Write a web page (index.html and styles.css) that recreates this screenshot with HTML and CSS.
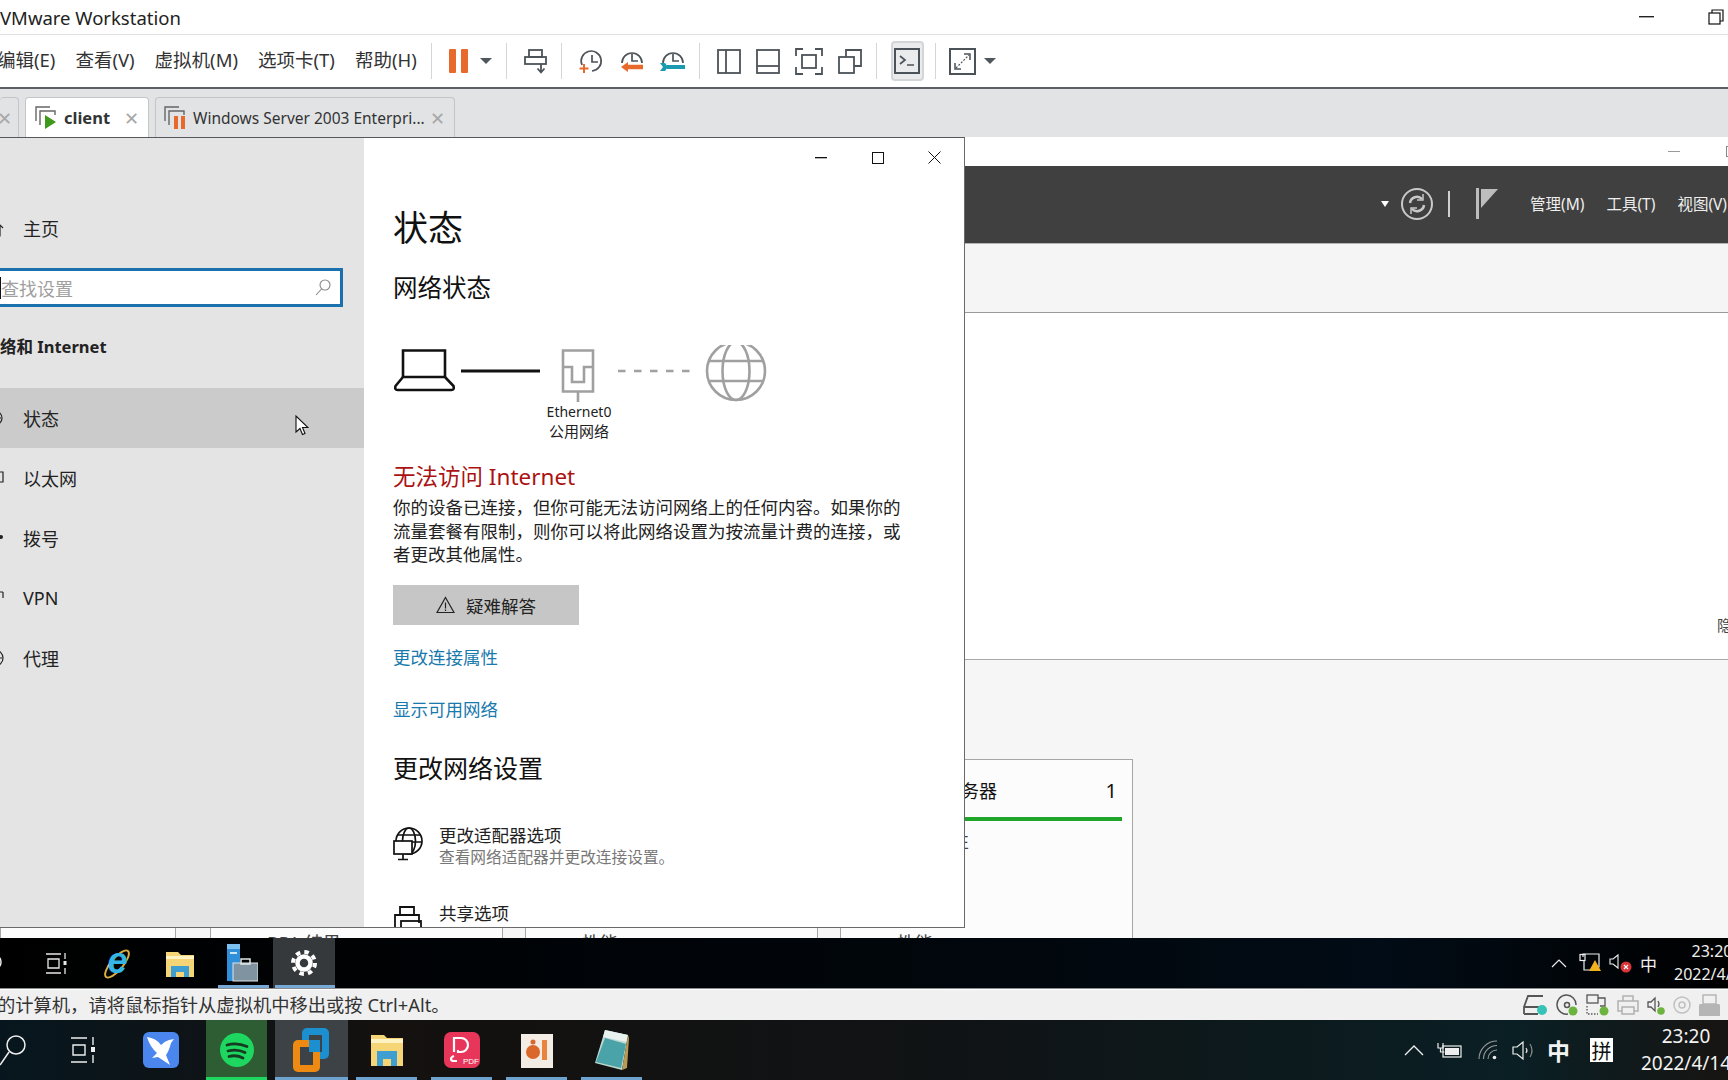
FILE: index.html
```html
<!DOCTYPE html>
<html lang="zh-CN">
<head>
    <meta charset="UTF-8">
    <title>VMware Workstation</title>
    <link rel="stylesheet" href="styles.css">
</head>
<body>
    <!-- host window title -->
    <div class="titlebar">
        <span class="app-title">VMware Workstation</span>
        <div class="app-controls">
            <svg width="15" height="2" viewBox="0 0 15 2"><rect width="15" height="1.400" fill="#222"/></svg>
            <svg width="16" height="16" viewBox="0 0 16 16" fill="none" stroke="#111" stroke-width="1.200"><rect x="1" y="4" width="11" height="11"/><path d="M4 4V1h11v11h-3"/></svg>
        </div>
    </div>

    <!-- menu and toolbar -->
    <div class="menubar">
        <span class="menu-item first">编辑(E)</span>
        <span class="menu-item">查看(V)</span>
        <span class="menu-item">虚拟机(M)</span>
        <span class="menu-item">选项卡(T)</span>
        <span class="menu-item">帮助(H)</span>
        <i class="sep"></i>
        <div class="tool-group wide">
            <svg width="19" height="24" viewBox="0 0 19 24"><rect width="7" height="24" rx="1" fill="#e8692c"/><rect x="12" width="7" height="24" rx="1" fill="#e8692c"/></svg>
            <i class="caret"></i>
        </div>
        <i class="sep"></i>
        <svg width="23" height="25" viewBox="0 0 23 25" fill="none" stroke="#4c5358" stroke-width="1.800"><rect x="5" y="1" width="13" height="7"/><rect x="1" y="8" width="21" height="7"/><path d="M17 15v8M13.500 19.500l3.500 4 3.500-4"/></svg>
        <i class="sep"></i>
        <div class="tool-group clocks">
            <svg width="24" height="26" viewBox="0 0 24 26" fill="none"><path d="M3 17a10 10 0 1 1 10 6" stroke="#4c5358" stroke-width="1.700"/><path d="M13 7v7h6" stroke="#4c5358" stroke-width="1.700"/><path d="M5 16v9M0.500 20.500h9" stroke="#e8692c" stroke-width="2"/></svg>
            <svg width="25" height="26" viewBox="0 0 25 26" fill="none"><path d="M3 15a10 10 0 0 1 20 0" stroke="#4c5358" stroke-width="1.700"/><path d="M13 6v7h6" stroke="#4c5358" stroke-width="1.700"/><path d="M24 19H8" stroke="#e8692c" stroke-width="4.500"/><path d="M9 14l-7 5 7 5z" fill="#e8692c"/></svg>
            <svg width="25" height="26" viewBox="0 0 25 26" fill="none"><path d="M3 15a10 10 0 0 1 20 0" stroke="#4c5358" stroke-width="1.700"/><path d="M13 6v7h6" stroke="#4c5358" stroke-width="1.700"/><path d="M7 19h18" stroke="#1b9bb0" stroke-width="4"/><path d="M0 15h5l3 4-3 4H0l3-4z" fill="#1b9bb0"/></svg>
        </div>
        <i class="sep"></i>
        <div class="tool-group panels">
            <svg width="24" height="25" viewBox="0 0 24 25" fill="none" stroke="#4c5358" stroke-width="1.800"><rect x="1" y="1" width="22" height="23"/><path d="M9 1v23"/></svg>
            <svg width="24" height="25" viewBox="0 0 24 25" fill="none" stroke="#4c5358" stroke-width="1.800"><rect x="1" y="1" width="22" height="23"/><path d="M1 17h22"/></svg>
            <svg width="28" height="27" viewBox="0 0 28 27" fill="none" stroke="#4c5358" stroke-width="1.800"><path d="M1 8V1h7M20 1h7v7M27 19v7h-7M8 26H1v-7"/><rect x="7" y="7" width="14" height="13"/></svg>
            <svg width="24" height="25" viewBox="0 0 24 25" fill="none" stroke="#4c5358" stroke-width="1.800"><rect x="1" y="8" width="15" height="16"/><path d="M8 8V1h15v16h-7"/></svg>
        </div>
        <i class="sep"></i>
        <div class="tool-active">
            <svg width="26" height="26" viewBox="0 0 26 26" fill="none" stroke="#4c5358"><rect x="1" y="1" width="24" height="24" stroke-width="2"/><path d="M6 8l5 4-5 4M13 17h7" stroke-width="1.700"/></svg>
        </div>
        <i class="sep"></i>
        <div class="tool-group fit">
            <svg width="27" height="27" viewBox="0 0 27 27" fill="none" stroke="#4c5358"><rect x="1" y="1" width="25" height="25" stroke-width="2"/><path d="M7 20l13-13" stroke-width="1.200" stroke-dasharray="2 1.500"/><path d="M15 6h6v6M6 15v6h6" stroke-width="1.500"/></svg>
            <i class="caret"></i>
        </div>
    </div>

    <!-- vm tabs -->
    <div class="tabbar">
        <div class="tab stub"><span class="tab-x">✕</span></div>
        <div class="tab current">
            <svg width="22" height="24" viewBox="0 0 22 24" fill="none"><path d="M1 15V1h14" stroke="#666" stroke-width="1.400"/><path d="M5 19V5h15v4" stroke="#666" stroke-width="1.400"/><path d="M10 9l11 7-11 7z" fill="#3f9a1c"/></svg>
            <span class="tab-name">client</span>
            <span class="tab-x">✕</span>
        </div>
        <div class="tab">
            <svg width="22" height="24" viewBox="0 0 22 24" fill="none"><path d="M1 15V1h14" stroke="#666" stroke-width="1.400"/><path d="M5 19V5h15v4" stroke="#666" stroke-width="1.400"/><rect x="10" y="10" width="4" height="13" fill="#e8692c"/><rect x="17" y="10" width="4" height="13" fill="#e8692c"/></svg>
            <span class="tab-label">Windows Server 2003 Enterpri...</span>
            <span class="tab-x">✕</span>
        </div>
    </div>

    <!-- guest screen -->
    <div class="guest">
        <div class="desktop">
            <!-- server manager behind the settings window -->
            <div class="sm-strip">
                <i class="sm-min"></i>
                <i class="sm-max"></i>
            </div>
            <div class="sm-bar">
                <i class="sm-caret"></i>
                <svg class="sm-refresh" width="34" height="34" viewBox="0 0 34 34" fill="none" stroke="#c9c9c9"><circle cx="17" cy="17" r="15" stroke-width="2"/><path d="M10 16a7 7 0 0 1 12-4M24 18a7 7 0 0 1-12 4" stroke-width="2.500"/><path d="M23 7v6h-6M11 27v-6h6" stroke-width="1.500"/></svg>
                <i class="sm-sep"></i>
                <svg class="sm-flag" width="22" height="31" viewBox="0 0 22 31"><rect x="0" y="0" width="3" height="31" fill="#bdbdbd"/><path d="M5 1h17L5 20z" fill="#bdbdbd"/></svg>
                <span class="sm-menu first">管理(M)</span>
                <span class="sm-menu">工具(T)</span>
                <span class="sm-menu">视图(V)</span>
            </div>
            <div class="sm-band"></div>
            <div class="sm-panel"><span class="sm-hide">隐藏</span></div>
            <div class="sm-tiles">
                <div class="tile tile-a"></div>
                <div class="tile tile-b"><p class="tile-low">BPA 结果</p></div>
                <div class="tile tile-c"><p class="tile-low">性能</p></div>
                <div class="tile tile-d">
                    <div class="tile-head"><span>所有服务器</span><b>1</b></div>
                    <i class="tile-ok"></i>
                    <p class="tile-first">可管理性</p>
                    <p class="tile-last">性能</p>
                </div>
            </div>

            <!-- settings window -->
            <div class="settings">
                <div class="side">
                    <div class="side-row home">
                        <svg class="side-icon" width="18" height="18" viewBox="0 0 18 18" fill="none" stroke="#222" stroke-width="1.200"><path d="M1 9l8-8 8 8M14 7v10h-3v-5H7v5H4V7"/></svg>
                        <span>主页</span>
                    </div>
                    <div class="search">
                        <i class="search-caret"></i>
                        <span class="search-hint">查找设置</span>
                        <svg width="16" height="17" viewBox="0 0 16 17" fill="none" stroke="#888" stroke-width="1.100"><circle cx="10" cy="6" r="5"/><path d="M6.500 10L1 16"/></svg>
                    </div>
                    <div class="side-title">络和 Internet</div>
                    <div class="side-nav">
                        <div class="side-row active">
                            <svg class="side-icon" width="18" height="18" viewBox="0 0 18 18" fill="none" stroke="#222" stroke-width="1.200"><circle cx="9" cy="9" r="7"/><path d="M3 9h12"/></svg>
                            <span>状态</span>
                        </div>
                        <div class="side-row">
                            <svg class="side-icon" width="18" height="18" viewBox="0 0 18 18" fill="none" stroke="#222" stroke-width="1.200"><path d="M4 3h13v10H4zM10 13v3"/></svg>
                            <span>以太网</span>
                        </div>
                        <div class="side-row">
                            <svg class="side-icon" width="18" height="18" viewBox="0 0 18 18" fill="#222"><circle cx="15" cy="8" r="2"/></svg>
                            <span>拨号</span>
                        </div>
                        <div class="side-row">
                            <svg class="side-icon" width="18" height="18" viewBox="0 0 18 18" fill="none" stroke="#222" stroke-width="1.200"><path d="M10 3h7M17 3v6"/></svg>
                            <span>VPN</span>
                        </div>
                        <div class="side-row">
                            <svg class="side-icon" width="18" height="18" viewBox="0 0 18 18" fill="none" stroke="#222" stroke-width="1.200"><circle cx="9" cy="9" r="8"/><path d="M9 1v16M2 9h14"/></svg>
                            <span>代理</span>
                        </div>
                    </div>
                </div>

                <div class="main">
                    <div class="win-controls">
                        <span class="win-btn"><svg width="12" height="2" viewBox="0 0 12 2"><rect width="12" height="1.300" fill="#111"/></svg></span>
                        <span class="win-btn"><svg width="12" height="12" viewBox="0 0 12 12" fill="none" stroke="#111"><rect x=".5" y=".5" width="11" height="11"/></svg></span>
                        <span class="win-btn"><svg width="13" height="13" viewBox="0 0 13 13" stroke="#111"><path d="M.5.5l12 12M12.500.5l-12 12"/></svg></span>
                    </div>
                    <h1>状态</h1>
                    <h2 class="net-head">网络状态</h2>
                    <svg class="diagram" width="380" height="100" viewBox="0 0 380 100" fill="none">
                        <!-- laptop -->
                        <path d="M9 32V5.500h42V32" stroke="#111" stroke-width="2.600"/>
                        <path d="M9 32L1.500 41q-1 4 2 4h54q3 0 2-4L51 32z" stroke="#111" stroke-width="2.600"/>
                        <path d="M67 26h79" stroke="#111" stroke-width="3"/>
                        <!-- adapter -->
                        <path d="M169 5.500h30v41h-30zM169 22h9v15h12V22h9M184 46.500V57" stroke="#a0a0a0" stroke-width="2.600"/>
                        <path d="M224 26h79" stroke="#a0a0a0" stroke-width="2.600" stroke-dasharray="7.500 8.500"/>
                        <!-- globe -->
                        <g stroke="#a0a0a0" stroke-width="2.600">
                            <circle cx="342" cy="26" r="29"/>
                            <ellipse cx="342" cy="26" rx="13.500" ry="29"/>
                            <path d="M316 16h52M316 36h52"/>
                        </g>
                        <text class="diagram-latin" x="185" y="72" text-anchor="middle">Ethernet0</text>
                        <text class="diagram-text" x="185" y="92" text-anchor="middle">公用网络</text>
                    </svg>
                    <div class="net-error">无法访问 Internet</div>
                    <p class="net-desc">你的设备已连接，但你可能无法访问网络上的任何内容。如果你的<br>流量套餐有限制，则你可以将此网络设置为按流量计费的连接，或<br>者更改其他属性。</p>
                    <div class="btn-trouble">
                        <svg width="19" height="18" viewBox="0 0 19 18" fill="none" stroke="#222" stroke-width="1.200"><path d="M9.500 1.500L18 16.500H1z"/><path d="M9.500 6.500v6M9.500 13.500v1.500"/></svg>
                        <span>疑难解答</span>
                    </div>
                    <a class="link first-link">更改连接属性</a>
                    <a class="link second-link">显示可用网络</a>
                    <h2 class="change-head">更改网络设置</h2>
                    <div class="option adapter">
                        <svg width="30" height="34" viewBox="0 0 30 34" fill="none" stroke="#111" stroke-width="1.700"><circle cx="16" cy="14" r="13"/><ellipse cx="16" cy="14" rx="6.500" ry="13"/><path d="M4 8h24M3 15h26"/><rect x="1" y="14" width="18" height="13" fill="#fff"/><path d="M10 27v5M5 32.500h10"/></svg>
                        <div class="option-text">
                            <div class="option-name">更改适配器选项</div>
                            <div class="option-sub">查看网络适配器并更改连接设置。</div>
                        </div>
                    </div>
                    <div class="option share">
                        <svg width="30" height="34" viewBox="0 0 30 34" fill="none" stroke="#111" stroke-width="1.800"><path d="M7 10V2h14v8M2 22V10h24v8"/><rect x="8" y="16" width="20" height="12"/></svg>
                        <div class="option-text">
                            <div class="option-name">共享选项</div>
                        </div>
                    </div>
                </div>
            </div>

            <svg class="pointer" width="14" height="21" viewBox="0 0 14 21"><path d="M1 1v16l4-3.500 2.500 6 2.500-1-2.500-6H13z" fill="#fff" stroke="#111" stroke-width="1.100"/></svg>
        </div>

        <!-- guest taskbar -->
        <div class="guest-taskbar">
            <span class="gt-btn gt-search"><svg width="20" height="20" viewBox="0 0 20 20" fill="none" stroke="#eee" stroke-width="1.500"><circle cx="8" cy="9" r="7"/></svg></span>
            <span class="gt-btn"><svg width="21" height="21" viewBox="0 0 21 21" fill="none" stroke="#e8e8e8" stroke-width="1.300"><path d="M0 1h15M0 20h15M2 6h11v9H2zM19 0v6M19 15v6"/><rect x="17.500" y="8" width="3" height="4" fill="#e8e8e8" stroke="none"/></svg></span>
            <span class="gt-btn">
                <svg width="30" height="32" viewBox="0 0 30 32" fill="none">
                    <ellipse cx="14" cy="17" rx="17" ry="6" transform="rotate(-50 14 17)" stroke="#d9b041" stroke-width="2"/>
                    <text class="ie-glyph" x="14.500" y="26" text-anchor="middle">e</text>
                </svg>
            </span>
            <span class="gt-btn">
                <svg width="28" height="29" viewBox="0 0 28 29"><path d="M0 3h12l3 3h13v22H0z" fill="#f5d576"/><rect y="7" width="28" height="3" fill="#fff3c4"/><path d="M5 17h18v11h-5v-5h-8v5H5z" fill="#3f9fd0"/></svg>
            </span>
            <span class="gt-btn running">
                <svg width="31" height="38" viewBox="0 0 31 38"><rect x="0" y="0" width="13" height="37" fill="#2f8fd8"/><rect x="0" y="0" width="13" height="5" fill="#7cc0f0"/><rect x="3" y="8" width="7" height="2" fill="#cde6f8"/><rect x="6" y="19" width="25" height="18" fill="#7f93a0" stroke="#dfe6ea"/><rect x="14" y="15" width="9" height="5" fill="none" stroke="#dfe6ea" stroke-width="1.500"/></svg>
            </span>
            <span class="gt-btn running current">
                <svg width="26" height="26" viewBox="0 0 26 26" fill="none"><circle cx="13" cy="13" r="6.500" stroke="#fff" stroke-width="4.500"/><circle cx="13" cy="13" r="11" stroke="#fff" stroke-width="4" stroke-dasharray="4.500 4.140"/></svg>
            </span>
            <div class="gt-tray">
                <svg class="tray-up" width="16" height="9" viewBox="0 0 16 9" fill="none" stroke="#eee" stroke-width="1.200"><path d="M1 8l7-7 7 7"/></svg>
                <svg class="tray-net" width="22" height="20" viewBox="0 0 22 20" fill="none" stroke="#eee" stroke-width="1.200"><path d="M4 4V1h16v13h-6M5 8v9h7"/><rect x="1" y="1.500" width="5" height="6"/><path d="M16 7l6 11H10z" fill="#f1b21d" stroke="none"/></svg>
                <svg class="tray-vol" width="24" height="20" viewBox="0 0 24 20" fill="none" stroke="#eee" stroke-width="1.100"><path d="M1 6h3l5-4v13l-5-4H1z"/><circle cx="17" cy="14" r="5.500" fill="#d9343a" stroke="none"/><path d="M15 12l4 4M19 12l-4 4" stroke="#fff"/></svg>
                <span class="tray-ime">中</span>
                <div class="tray-clock"><span>23:20</span><span>2022/4/14</span></div>
            </div>
        </div>
    </div>

    <!-- host status line -->
    <div class="statusbar">
        <span class="status-text">的计算机，请将鼠标指针从虚拟机中移出或按 Ctrl+Alt。</span>
        <div class="status-icons">
            <svg width="25" height="22" viewBox="0 0 25 22" fill="none" stroke="#555" stroke-width="1.800"><path d="M1 20V13L5 2h15"/><path d="M1 13h15M1 20h14"/><circle cx="19" cy="16" r="5" fill="#35c3b8" stroke="none"/></svg>
            <svg width="22" height="22" viewBox="0 0 22 22" fill="none" stroke="#555" stroke-width="1.500"><path d="M12 20A9.500 9.500 0 1 1 20 11"/><circle cx="11" cy="11" r="2.500"/><circle cx="17" cy="17" r="4.500" fill="#6cb33f" stroke="none"/></svg>
            <svg width="23" height="22" viewBox="0 0 23 22" fill="none" stroke="#555" stroke-width="1.300"><rect x="1" y="1" width="11" height="8"/><path d="M12 4h7v8h-5"/><path d="M1 12v8h11" stroke-dasharray="1.500 1.500"/><circle cx="18" cy="17" r="4.500" fill="#6cb33f" stroke="none"/></svg>
            <svg width="22" height="20" viewBox="0 0 22 20" fill="none" stroke="#b0b0b0" stroke-width="1.500"><path d="M6 6V1h10v5M5 16H1V6h20v10h-4M5 12h12v7H5z"/></svg>
            <svg width="18" height="21" viewBox="0 0 18 21" fill="none" stroke="#555" stroke-width="1.300"><path d="M1 7h3l4-4v13l-4-4H1zM11 6q2 3 0 6"/><circle cx="14" cy="16" r="3.800" fill="#6cb33f" stroke="none"/></svg>
            <svg width="18" height="18" viewBox="0 0 18 18" fill="none" stroke="#c0c0c0" stroke-width="1.500"><circle cx="9" cy="9" r="8"/><circle cx="9" cy="9" r="3"/></svg>
            <svg width="21" height="22" viewBox="0 0 21 22"><path d="M4 1h13v9H4z" fill="none" stroke="#b5b5b5" stroke-width="1.500"/><path d="M1 10h19q1 0 1 2v10H0V12q0-2 1-2z" fill="#b5b5b5"/></svg>
        </div>
    </div>

    <!-- host taskbar -->
    <div class="host-taskbar">
        <span class="ht-btn ht-search"><svg width="26" height="34" viewBox="0 0 26 34" fill="none" stroke="#eee" stroke-width="1.500"><circle cx="16" cy="12" r="9"/><path d="M9 19L0 32"/></svg></span>
        <span class="ht-btn ht-view"><svg width="25" height="26" viewBox="0 0 25 26" fill="none" stroke="#eee" stroke-width="1.400"><path d="M0 1h16M0 25h16M2 8h12v10H2zM22 0v8M22 18v8"/><rect x="20" y="10" width="4" height="5" fill="#eee" stroke="none"/></svg></span>
        <span class="ht-btn ht-bird">
            <svg width="36" height="36" viewBox="0 0 36 36"><rect width="36" height="36" rx="6" fill="#4a86ee"/><path d="M4 5q9 1 14 8 4-4 8-5l5-1-3 4q-2 8-5 12l4 10-12-8-6 1 5-5Q7 15 4 5z" fill="#fff"/></svg>
        </span>
        <span class="ht-btn ht-spotify">
            <svg width="34" height="34" viewBox="0 0 34 34" fill="none"><circle cx="17" cy="17" r="17" fill="#1ed760"/><path d="M7 12q10-3 20 1.500M8 18q9-2.500 17 1.500M9 23.500q7-2 14 1.500" stroke="#153b20" stroke-width="2.800" stroke-linecap="round"/></svg>
        </span>
        <span class="ht-btn ht-vmware">
            <svg width="36" height="44" viewBox="0 0 36 44" fill="none"><rect x="9" y="0" width="27" height="31" rx="5" fill="#1c8fd0"/><rect x="16" y="7" width="13" height="17" fill="#3c4246"/><rect x="0" y="12" width="27" height="32" rx="5" fill="#ee8a12"/><rect x="7" y="19" width="13" height="18" fill="#3c4246"/><rect x="16" y="12" width="11" height="12" fill="#1c8fd0"/></svg>
        </span>
        <span class="ht-btn ht-app">
            <svg width="32" height="34" viewBox="0 0 32 34"><path d="M0 2h13l3 3h16v28H0z" fill="#f5d576"/><rect y="6" width="32" height="4" fill="#fff3c4"/><path d="M6 18h20v15h-6v-7h-8v7H6z" fill="#3f9fd0"/></svg>
        </span>
        <span class="ht-btn ht-app">
            <svg width="36" height="36" viewBox="0 0 36 36" fill="none"><rect width="36" height="36" rx="7" fill="#e8365a"/><path d="M10 20V6h7a7 7 0 0 1 0 14h-3v-2M10 24q-3 1-3 3t3 2h3" stroke="#fff" stroke-width="2.200"/><text class="pdf-glyph" x="19" y="32">PDF</text></svg>
        </span>
        <span class="ht-btn ht-app">
            <svg width="32" height="36" viewBox="0 0 32 36"><rect y="2" width="32" height="34" fill="#f3ece4"/><circle cx="12" cy="20" r="7" fill="#d9682a"/><circle cx="12" cy="10" r="2.500" fill="#d9682a"/><rect x="21" y="8" width="5" height="20" fill="#e8843c"/></svg>
        </span>
        <span class="ht-btn ht-app">
            <svg width="34" height="42" viewBox="0 0 34 42"><path d="M10 1l23 5-6 35L0 34z" fill="#bcd8d0"/><path d="M10 1l23 5-2 7L8 8z" fill="#e8f2ee"/><path d="M1 33L10 9l21 6-5 24z" fill="#4aa3a8"/><path d="M33 6l-6 35 5-2 2-30z" fill="#b89a52"/></svg>
        </span>
        <div class="ht-tray">
            <svg class="tray-up" width="20" height="11" viewBox="0 0 20 11" fill="none" stroke="#eee" stroke-width="1.400"><path d="M1 10l9-9 9 9"/></svg>
            <svg class="ht-power" width="25" height="15" viewBox="0 0 25 15" fill="none" stroke="#eee" stroke-width="1.200"><rect x="6" y="3" width="18" height="11"/><rect x="8" y="5" width="14" height="7" fill="#eee" stroke="none"/><path d="M1 0v5h5V0M3.500 5v4h4"/></svg>
            <svg class="ht-wifi" width="20" height="20" viewBox="0 0 20 20" fill="none" stroke="#9a9a9a" stroke-width="1.100"><path d="M1 19A18 18 0 0 1 19 1M5.500 19A13.500 13.500 0 0 1 19 5.500M10 19a9 9 0 0 1 9-9"/><circle cx="16.500" cy="17.500" r="1.800" fill="#eee" stroke="none"/></svg>
            <svg class="ht-sound" width="23" height="21" viewBox="0 0 23 21" fill="none" stroke="#eee" stroke-width="1.200"><path d="M1 7h4l6-5v17l-6-5H1z"/><path d="M14 8q2 2.500 0 5" stroke="#ddd"/><path d="M18 4q4 6.500 0 13" stroke="#888"/></svg>
            <span class="ht-ime">中</span>
            <span class="ht-pin">拼</span>
            <div class="ht-clock"><span>23:20</span><span>2022/4/14</span></div>
        </div>
    </div>
</body>
</html>
```

FILE: styles.css
```css
* {
    margin: 0;
    padding: 0;
    box-sizing: border-box;
}

body {
    width: 1728px;
    height: 1080px;
    overflow: hidden;
    display: flex;
    flex-direction: column;
    background: #fff;
    color: #111;
    font-family: "Noto Sans", "Noto Sans CJK SC", sans-serif;
}

i {
    display: block;
    font-style: normal;
}

svg {
    display: block;
    flex: none;
}

/* host window */
.titlebar {
    height: 35px;
    flex: none;
    display: flex;
    justify-content: space-between;
    align-items: center;
    border-bottom: 1px solid #e2e2e2;
}

.app-title {
    font-size: 18.500px;
    color: #222;
}

.app-controls {
    display: flex;
    align-items: center;
    gap: 54px;
    padding-right: 4px;
}

.menubar {
    height: 54px;
    flex: none;
    display: flex;
    align-items: center;
    border-bottom: 2px solid #5b5f63;
}

.menu-item {
    margin-left: 20px;
    padding-bottom: 4px;
    font-size: 18.500px;
    color: #333;
    white-space: nowrap;
}

.menu-item.first {
    margin-left: -3px;
}

.sep {
    width: 1px;
    height: 36px;
    margin: 0 17px 0 14px;
    background: #d4d6d8;
}

.tool-group {
    display: flex;
    align-items: center;
}

.tool-group.wide {
    gap: 12px;
}

.tool-group.clocks {
    gap: 16px;
}

.tool-group.panels {
    gap: 15px;
}

.tool-group.fit {
    gap: 8px;
    margin-left: -4px;
}

.caret {
    width: 0;
    height: 0;
    border-left: 6px solid transparent;
    border-right: 6px solid transparent;
    border-top: 6px solid #50575c;
}

.tool-active {
    width: 33px;
    height: 40px;
    display: flex;
    align-items: center;
    justify-content: center;
    margin: 0 -3px;
    background: #e9ebed;
    border: 2px solid #d3d5d7;
    border-radius: 4px;
}

/* vm tabs */
.tabbar {
    height: 48px;
    flex: none;
    display: flex;
    align-items: flex-end;
    gap: 6px;
    background: #e1e3e5;
}

.tab {
    height: 40px;
    display: flex;
    align-items: center;
    gap: 7px;
    padding: 0 8px;
    border: 1px solid #c3c6c9;
    border-bottom: none;
    border-radius: 4px 4px 0 0;
    font-size: 15.500px;
    color: #333;
    white-space: nowrap;
}

.tab.stub {
    width: 19px;
    padding: 0;
    border-left: none;
    justify-content: flex-end;
    overflow: hidden;
}

.tab.current {
    width: 124px;
    padding-left: 9px;
    background: #fff;
}

.tab-name {
    font-size: 16.500px;
    font-weight: 700;
}

.tab-label {
    width: 230px;
}

.tab-x {
    font-size: 18px;
    line-height: 1;
    color: #a8a8a8;
    margin-left: auto;
    margin-right: 1px;
}

.tab.stub .tab-x {
    margin: 0 6px 0 -6px;
}

/* guest screen */
.guest {
    flex: 1;
    display: flex;
    flex-direction: column;
    min-height: 0;
}

.desktop {
    position: relative;
    height: 801px;
    flex: none;
    overflow: hidden;
    display: flex;
    flex-direction: column;
    background: #f6f6f6;
}

.sm-strip {
    height: 29px;
    flex: none;
    display: flex;
    align-items: center;
    justify-content: flex-end;
    gap: 46px;
    background: #fff;
}

.sm-min {
    width: 12px;
    height: 1px;
    background: #999;
}

.sm-max {
    width: 12px;
    height: 11px;
    margin-right: -10px;
    border: 1px solid #888;
}

.sm-bar {
    height: 78px;
    flex: none;
    display: flex;
    align-items: center;
    justify-content: flex-end;
    padding: 0 1px 2px 0;
    background: #404040;
    border-bottom: 1px solid #b5b5b5;
}

.sm-caret {
    width: 0;
    height: 0;
    margin-right: 11px;
    border-left: 4.500px solid transparent;
    border-right: 4.500px solid transparent;
    border-top: 6px solid #fff;
}

.sm-sep {
    width: 2px;
    height: 26px;
    margin: 0 26px 0 14px;
    background: #cfcfcf;
}

.sm-menu {
    margin-left: 22px;
    font-size: 15.500px;
    color: #eee;
    white-space: nowrap;
}

.sm-menu.first {
    margin-left: 32px;
}

.sm-band {
    height: 69px;
    flex: none;
    background: #f5f5f5;
    border-bottom: 1px solid #9a9a9a;
}

.sm-panel {
    height: 347px;
    flex: none;
    display: flex;
    align-items: flex-end;
    justify-content: flex-end;
    padding-bottom: 24px;
    background: #fff;
    border-bottom: 1px solid #a8a8a8;
}

.sm-hide {
    width: 11px;
    overflow: hidden;
    font-size: 15px;
    white-space: nowrap;
    color: #444;
}

.sm-tiles {
    display: flex;
    margin-top: 99px;
    align-items: flex-start;
}

.tile {
    height: 400px;
    flex: none;
    background: #fcfcfc;
    border: 1px solid #a6a6a6;
    border-bottom: none;
    overflow: hidden;
}

.tile-a {
    width: 176px;
    margin-right: 34px;
}

.tile-b {
    width: 293px;
    margin-right: 22px;
}

.tile-c {
    width: 293px;
    margin-right: 22px;
}

.tile-d {
    width: 293px;
}

.tile-head {
    height: 57px;
    display: flex;
    align-items: center;
    justify-content: space-between;
    padding: 3px 15px 0 66px;
    font-size: 18px;
    white-space: nowrap;
}

.tile-head b {
    font-weight: 400;
    font-size: 20px;
}

.tile-ok {
    height: 4px;
    margin: 0 10px;
    background: #1fa52a;
}

.tile p {
    height: 31px;
    line-height: 31px;
    padding-left: 56px;
    font-size: 18px;
    color: #444;
    white-space: nowrap;
}

.tile .tile-low {
    margin-top: 168px;
}

.tile .tile-first {
    margin-top: 5px;
}

.tile .tile-last {
    margin-top: 71px;
}

/* settings window, it floats over the server manager */
.settings {
    position: absolute;
    left: 0;
    top: 0;
    width: 965px;
    height: 791px;
    display: flex;
    overflow: hidden;
    background: #fff;
    border-top: 1px solid #55595c;
    border-right: 1px solid #6a6a6a;
    border-bottom: 1px solid #6a6a6a;
}

.side {
    width: 364px;
    flex: none;
    padding-top: 60px;
    background: #e4e4e4;
    font-size: 18px;
    color: #222;
}

.side-row {
    height: 60px;
    display: flex;
    align-items: center;
    gap: 19px;
}

.side-icon {
    margin-left: -14px;
}

.side-row.active {
    background: #cbcbcb;
}

.search {
    width: 347px;
    height: 39px;
    margin: 10px 0 0 -4px;
    display: flex;
    align-items: center;
    background: #fff;
    border: 3px solid #1a71ae;
}

.search-caret {
    width: 1px;
    height: 22px;
    margin-left: 1px;
    background: #111;
}

.search-hint {
    flex: 1;
    color: #a0a0a0;
}

.search svg {
    margin-right: 9px;
}

.side-title {
    margin-top: 28px;
    line-height: 24px;
    font-weight: 700;
    font-size: 16.500px;
    white-space: nowrap;
}

.side-nav {
    margin-top: 29px;
}

.main {
    flex: 1;
    padding: 0 1px 0 29px;
}

.win-controls {
    height: 39px;
    display: flex;
    justify-content: flex-end;
}

.win-btn {
    width: 57px;
    display: flex;
    align-items: center;
    justify-content: center;
}

h1 {
    margin-top: 29px;
    font-size: 35px;
    line-height: 44px;
    font-weight: 400;
}

h2 {
    font-size: 24.500px;
    line-height: 32px;
    font-weight: 400;
}

.net-head {
    margin-top: 22px;
}

.diagram {
    margin: 41px 0 0 1px;
    overflow: hidden;
}

.diagram-text {
    font-size: 15px;
    fill: #222;
}

.diagram-latin {
    font-size: 14px;
    fill: #222;
}

.net-error {
    margin-top: 16px;
    font-size: 22.500px;
    line-height: 32px;
    color: #ab1212;
}

.net-desc {
    margin-top: 3px;
    font-size: 17.500px;
    line-height: 23.700px;
    color: #222;
    white-space: nowrap;
}

.btn-trouble {
    width: 186px;
    height: 40px;
    margin-top: 18px;
    display: flex;
    align-items: center;
    justify-content: center;
    gap: 11px;
    background: #c6c6c6;
    font-size: 17.500px;
    color: #222;
}

.link {
    display: block;
    line-height: 24px;
    font-size: 17.500px;
    color: #1879ad;
}

.first-link {
    margin-top: 20px;
}

.second-link {
    margin-top: 28px;
}

.change-head {
    margin-top: 31px;
    font-size: 25px;
}

.option {
    display: flex;
    gap: 16px;
}

.option svg {
    margin-top: 3px;
}

.option.adapter {
    margin-top: 40px;
}

.option.share {
    margin-top: 34px;
}

.option-name {
    line-height: 22px;
    font-size: 17.500px;
    color: #222;
}

.option-sub {
    line-height: 22px;
    font-size: 15.700px;
    color: #777;
    white-space: nowrap;
}

.pointer {
    position: absolute;
    left: 295px;
    top: 278px;
}

/* guest taskbar */
.guest-taskbar {
    height: 51px;
    flex: none;
    display: flex;
    align-items: center;
    background: linear-gradient(90deg, #000, #01070d 60%, #020c16 80%, #000);
    border-bottom: 1px solid #8a8d90;
}

.gt-btn {
    width: 62px;
    height: 50px;
    display: flex;
    align-items: center;
    justify-content: center;
    position: relative;
}

.gt-search {
    width: 25px;
    justify-content: flex-end;
}

.gt-search svg {
    margin-right: 19px;
}

.gt-btn.running::after {
    content: "";
    position: absolute;
    left: 7px;
    right: 4px;
    bottom: 0;
    height: 3px;
    background: #76a9d6;
}

.gt-btn.current {
    background: #36393b;
}

.gt-btn.current::after {
    left: 2px;
    right: 0;
}

.gt-tray {
    margin-left: auto;
    margin-right: -22px;
    display: flex;
    align-items: center;
    color: #eee;
}

.gt-tray .tray-up {
    margin-right: 12px;
}

.tray-vol {
    margin-left: 8px;
}

.tray-ime {
    margin: 0 17px 0 7px;
    font-size: 17px;
}

.tray-clock {
    width: 76px;
    display: flex;
    flex-direction: column;
    align-items: center;
    font-size: 16px;
    line-height: 23px;
    white-space: nowrap;
}

/* host status line */
.statusbar {
    height: 30px;
    flex: none;
    display: flex;
    align-items: center;
    justify-content: space-between;
    background: #f0f0f0;
}

.status-text {
    margin-left: -3px;
    padding-bottom: 2px;
    font-size: 18.300px;
    color: #333;
    white-space: nowrap;
}

.status-icons {
    display: flex;
    align-items: center;
    gap: 8px;
    padding-right: 8px;
}

/* host taskbar */
.host-taskbar {
    height: 60px;
    flex: none;
    display: flex;
    align-items: center;
    color: #f2f2f2;
    background: linear-gradient(90deg, #07161e, #14110f 22%, #101315 55%, #0a1f24 88%, #171412);
}

.ht-btn {
    height: 60px;
    display: flex;
    align-items: center;
    justify-content: center;
    flex: none;
    position: relative;
}

.ht-search {
    width: 26px;
    justify-content: flex-end;
}

.ht-view {
    width: 100px;
    padding-left: 14px;
}

.ht-bird {
    width: 70px;
    margin-right: 10px;
}

.ht-spotify {
    width: 61px;
    margin-right: 8px;
    background: #2f5d33;
}

.ht-spotify::after {
    content: "";
    position: absolute;
    left: 0;
    right: 0;
    bottom: 0;
    height: 3px;
    background: #1ed760;
}

.ht-vmware {
    width: 73px;
    margin-right: 8px;
    padding-right: 2px;
    background: #3c4246;
}

.ht-vmware::after {
    content: "";
    position: absolute;
    left: 0;
    right: 0;
    bottom: 0;
    height: 3px;
    background: #6fa3cf;
}

.ht-app {
    width: 61px;
    margin-right: 14px;
}

.ht-app::after {
    content: "";
    position: absolute;
    left: 0;
    right: 0;
    bottom: 0;
    height: 3px;
    background: #6fa3cf;
}

.ie-glyph {
    font-family: "Liberation Sans", sans-serif;
    font-size: 36px;
    font-weight: 700;
    font-style: italic;
    fill: #35b5e5;
}

.pdf-glyph {
    font-family: "Liberation Sans", sans-serif;
    font-size: 8px;
    fill: #fff;
}

.ht-tray {
    margin-left: auto;
    margin-right: -4px;
    display: flex;
    align-items: center;
}

.ht-tray .tray-up {
    margin-right: 13px;
}

.ht-wifi {
    margin-left: 16px;
}

.ht-sound {
    margin-left: 14px;
}

.ht-ime {
    margin-left: 12px;
    font-size: 23px;
    font-weight: 700;
}

.ht-pin {
    width: 23px;
    height: 24px;
    margin-left: 20px;
    display: flex;
    align-items: center;
    justify-content: center;
    background: #fff;
    color: #111;
    font-size: 20px;
}

.ht-clock {
    width: 92px;
    margin-left: 27px;
    display: flex;
    flex-direction: column;
    align-items: center;
    font-size: 19px;
    line-height: 27px;
    white-space: nowrap;
}
```
